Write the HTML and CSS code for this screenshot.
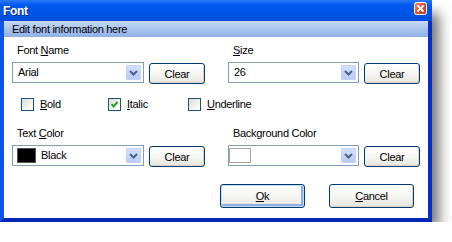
FILE: index.html
```html
<!DOCTYPE html>
<html lang="en">

<head>
    <meta charset="UTF-8">
    <title>Font</title>
    <link rel="stylesheet" href="styles.css">
</head>

<body>
    <div class="window">
        <div class="titlebar">
            <span class="title">Font</span>
            <svg class="close" width="13" height="13" viewBox="0 0 13 13">
                <defs>
                    <linearGradient id="cg" x1="0" y1="0" x2="1" y2="1">
                        <stop offset="0" stop-color="#f0906c"/>
                        <stop offset="0.5" stop-color="#e0502a"/>
                        <stop offset="1" stop-color="#c43a1a"/>
                    </linearGradient>
                </defs>
                <rect x="0.5" y="0.5" width="12" height="12" rx="2" fill="url(#cg)" stroke="#fff"/>
                <path d="M4 4 L9 9 M9 4 L4 9" stroke="#fff" stroke-width="1.8" stroke-linecap="square"/>
            </svg>
        </div>
        <div class="frame">
            <div class="header">Edit font information here</div>
            <div class="content">
                <div class="row">
                    <div class="field">
                        <label>Font <u>N</u>ame</label>
                        <div class="pair">
                            <div class="combo"><span class="value">Arial</span><span class="drop"><svg width="15" height="15" viewBox="0 0 15 15"><path d="M4 6 L7.5 9.5 L11 6" fill="none" stroke="#4d6185" stroke-width="2"/></svg></span></div>
                            <button class="btn clear">Clear</button>
                        </div>
                    </div>
                    <div class="field">
                        <label><u>S</u>ize</label>
                        <div class="pair">
                            <div class="combo narrow"><span class="value">26</span><span class="drop"><svg width="15" height="15" viewBox="0 0 15 15"><path d="M4 6 L7.5 9.5 L11 6" fill="none" stroke="#4d6185" stroke-width="2"/></svg></span></div>
                            <button class="btn clear">Clear</button>
                        </div>
                    </div>
                </div>

                <div class="checks">
                    <div class="check"><span class="box"></span><u>B</u>old</div>
                    <div class="check"><span class="box"><svg width="11" height="11" viewBox="0 0 11 11"><path d="M2.5 5 L4.5 7.5 L8.5 3" fill="none" stroke="#21a121" stroke-width="2"/></svg></span><u>I</u>talic</div>
                    <div class="check"><span class="box"></span><u>U</u>nderline</div>
                </div>

                <div class="row colors">
                    <div class="field">
                        <label>Text <u>C</u>olor</label>
                        <div class="pair">
                            <div class="combo"><span class="swatch black"></span><span class="value">Black</span><span class="drop"><svg width="15" height="15" viewBox="0 0 15 15"><path d="M4 6 L7.5 9.5 L11 6" fill="none" stroke="#4d6185" stroke-width="2"/></svg></span></div>
                            <button class="btn clear">Clear</button>
                        </div>
                    </div>
                    <div class="field">
                        <label>Back<u>g</u>round Color</label>
                        <div class="pair">
                            <div class="combo narrow bg"><span class="swatch white"></span><span class="drop"><svg width="15" height="15" viewBox="0 0 15 15"><path d="M4 6 L7.5 9.5 L11 6" fill="none" stroke="#4d6185" stroke-width="2"/></svg></span></div>
                            <button class="btn clear">Clear</button>
                        </div>
                    </div>
                </div>

                <div class="actions">
                    <button class="btn action default"><u>O</u>k</button>
                    <button class="btn action"><u>C</u>ancel</button>
                </div>
            </div>
        </div>
    </div>
</body>

</html>
```

FILE: styles.css
```css
body {
    margin: 0;
    background: #fff;
    font-family: "Liberation Sans", Arial, sans-serif;
    font-size: 11px;
    letter-spacing: -0.3px;
    color: #000;
}

.window {
    width: 432px;
    height: 222px;
    display: flex;
    flex-direction: column;
    box-shadow: 10px 10px 12px -3px rgba(0, 0, 0, 0.55);
}

.titlebar {
    height: 21px;
    flex: none;
    display: flex;
    align-items: center;
    justify-content: space-between;
    padding: 0 5px 0 3px;
    background: linear-gradient(#2a7af8, #0058ee 25%, #0054e6 70%, #004ad8);
    color: #fff;
    font-weight: bold;
    font-size: 12px;
}

.title {
    margin-top: 1px;
    text-shadow: 1px 1px 0 #0a2a8c;
}

.close {
    display: block;
    margin-top: -4px;
}

.frame {
    flex: 1;
    display: flex;
    flex-direction: column;
    background: #fff;
    border-left: 4px solid #0a55ee;
    border-right: 4px solid #0530c8;
    border-bottom: 4px solid #0426b4;
}

.header {
    height: 16px;
    line-height: 16px;
    padding-left: 8px;
    background: linear-gradient(#c8daf7, #a9c3ee 50%, #90b1e6);
}

.content {
    padding: 7px 0 0 8px;
}

.row {
    display: flex;
}

.field {
    flex: none;
    width: 216px;
}

.field label {
    display: block;
    line-height: 13px;
    margin-bottom: 5px;
    padding-left: 5px;
}

.pair {
    display: flex;
    align-items: flex-start;
    gap: 5px;
}

.combo {
    width: 132px;
    height: 21px;
    box-sizing: border-box;
    border: 1px solid #7f9db9;
    display: flex;
    align-items: center;
    padding-left: 5px;
}

.combo.narrow {
    width: 131px;
}

.combo.bg {
    padding-left: 0;
}

.value {
    line-height: 19px;
}

.drop {
    margin-left: auto;
    margin-right: 2px;
    width: 15px;
    height: 15px;
    box-sizing: border-box;
    background: linear-gradient(#d2e0fd, #b8ccf8);
    border: 1px solid #c3d4f7;
    border-radius: 1px;
}

.drop svg {
    display: block;
    margin: -1px;
}

.swatch {
    width: 19px;
    height: 15px;
    box-sizing: border-box;
    margin-right: 5px;
    margin-left: -1px;
}

.swatch.black {
    background: #000;
    border: 1px solid #555;
}

.swatch.white {
    width: 22px;
    margin-left: 0;
    background: #fff;
    border: 1px solid #a8a8a0;
}

.btn {
    font-family: "Liberation Sans", Arial, sans-serif;
    font-size: 11px;
    letter-spacing: -0.3px;
    color: #000;
    border: 1px solid #003c74;
    border-radius: 3px;
    background: linear-gradient(#ffffff, #f5f5f1 55%, #e6e4dc);
    box-shadow: inset -1px -1px 0 #d8d2c6;
    padding: 0;
}

.clear {
    width: 56px;
    height: 21px;
    margin-top: 1px;
}

.checks {
    display: grid;
    grid-template-columns: 87px 80px auto;
    margin-top: 14px;
    padding-left: 9px;
}

.check {
    display: flex;
    align-items: center;
    line-height: 13px;
}

.box {
    width: 13px;
    height: 13px;
    box-sizing: border-box;
    border: 1px solid #1c5180;
    background: linear-gradient(135deg, #dcdcd5, #f4f4f0 60%, #fff);
    margin-right: 6px;
}

.box svg {
    display: block;
}

.colors {
    margin-top: 16px;
}

.actions {
    display: flex;
    justify-content: flex-end;
    gap: 24px;
    margin-top: 17px;
    margin-right: 14px;
}

.action {
    width: 85px;
    height: 24px;
}

.default {
    box-shadow: inset 0 0 0 1px #c4d8f8, inset -1px -1px 0 2px #8caee6;
}
```
